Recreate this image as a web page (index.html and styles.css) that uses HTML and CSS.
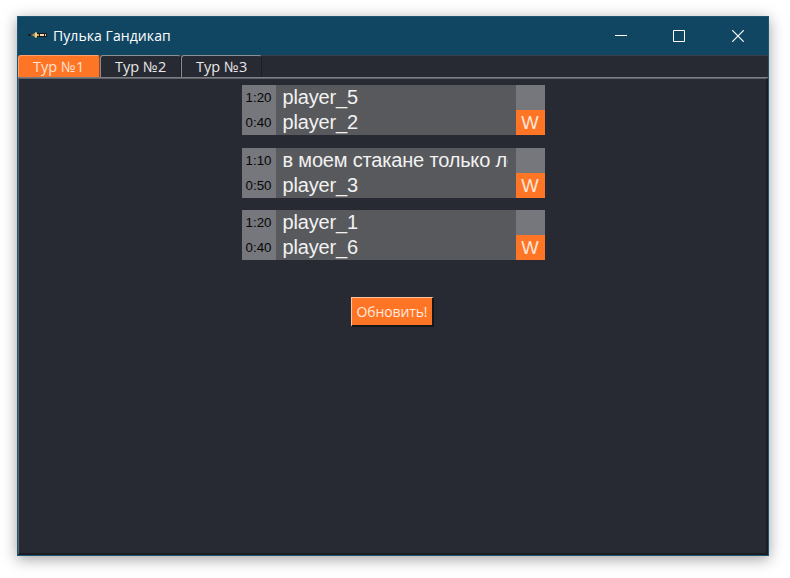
FILE: index.html
```html
<!DOCTYPE html>
<html lang="ru">
<head>
<meta charset="utf-8">
<title>Пулька Гандикап</title>
<link rel="stylesheet" href="styles.css">
</head>
<body>
<main class="window">
  <header class="titlebar">
    <svg class="app-icon" width="20" height="8" viewBox="0 0 20 8">
      <path d="M0 4h7" stroke="#17232b" stroke-width="2"/>
      <path d="M3 4h5" stroke="#8b7a49"/>
      <path d="M4 4l4-3v6z" fill="#b39a50"/>
      <path d="M7 1.500h2v5H7z" fill="#f1d38b"/>
      <path d="M9 2h10v4H9z" fill="#16191d"/>
      <path d="M9 3h2v2H9z" fill="#c9a657"/>
      <path d="M12 3h4v2h-4zM17 3h1v2h-1z" fill="#f2d7a8"/>
    </svg>
    <h1 class="title">Пулька Гандикап</h1>
    <div class="controls">
      <svg width="12" height="12" viewBox="0 0 12 12"><path d="M0 5.5h12" stroke="#fff"/></svg>
      <svg width="12" height="12" viewBox="0 0 12 12"><path d="M.5.5h11v11H.5z" fill="none" stroke="#fff"/></svg>
      <svg width="12" height="12" viewBox="0 0 12 12"><path d="M.3.3l11.4 11.4M11.7.3L.3 11.7" stroke="#fff" stroke-width="1.2"/></svg>
    </div>
  </header>
  <nav class="tabs">
    <span class="tab active">Тур №1</span>
    <span class="tab">Тур №2</span>
    <span class="tab">Тур №3</span>
  </nav>
  <section class="pane">
    <div class="matches">
      <div class="match">
        <span class="time">1:20</span><span class="name"><span class="clip">player_5</span></span><span class="result"></span>
        <span class="time">0:40</span><span class="name"><span class="clip">player_2</span></span><span class="result win">W</span>
      </div>
      <div class="match">
        <span class="time">1:10</span><span class="name"><span class="clip long">в моем стакане только ле</span></span><span class="result"></span>
        <span class="time">0:50</span><span class="name"><span class="clip">player_3</span></span><span class="result win">W</span>
      </div>
      <div class="match">
        <span class="time">1:20</span><span class="name"><span class="clip">player_1</span></span><span class="result"></span>
        <span class="time">0:40</span><span class="name"><span class="clip">player_6</span></span><span class="result win">W</span>
      </div>
    </div>
    <button class="refresh">Обновить!</button>
  </section>
</main>
</body>
</html>
```
FILE: styles.css
```css
* { box-sizing: border-box; }
body {
  margin: 0;
  padding: 16px 21px 22px 17px;
  height: 578px;
  overflow: hidden;
  background: #fff;
  font-family: "Open Sans", "Noto Sans", sans-serif;
}
.window {
  width: 752px;
  height: 540px;
  display: flex;
  flex-direction: column;
  background: #282a33;
  border: 1px solid #1c5672;
  box-shadow: 0 3px 14px rgba(0, 0, 0, .38);
}
.titlebar {
  height: 38px;
  flex: none;
  display: flex;
  align-items: center;
  padding: 0 24px 0 10px;
  background: #114663;
  color: #fff;
}
.app-icon { margin: -2px 5px 0 0; }
.title {
  margin: 0;
  font-size: 14px;
  font-weight: 400;
  line-height: 20px;
  letter-spacing: .07px;
  white-space: nowrap;
}
.controls {
  margin-left: auto;
  display: flex;
  gap: 47px;
}
.controls svg { display: block; }
.controls svg:first-child { margin-right: -1px; }
.tabs {
  height: 23px;
  flex: none;
  display: flex;
  border-top: 1px solid #3b3e47;
  border-bottom: 1px solid #7b7d82;
}
.tab {
  width: 81px;
  margin-top: -1px;
  padding-left: 14px;
  border: 1px solid #8c8e92;
  border-right-color: #1c1e24;
  border-bottom: 0;
  border-radius: 3px 3px 0 0;
  color: #e8e8e9;
  font-size: 14.5px;
  line-height: 22px;
  letter-spacing: .05px;
  white-space: nowrap;
}
.tab.active {
  width: 82px;
  background: #ff7526;
  border-color: #ffa16b;
  border-right-color: #8a4a2a;
  color: #ffe3d3;
}
.pane {
  flex: 1;
  display: flex;
  flex-direction: column;
  align-items: center;
  padding: 6px 0 0 1px;
  border: solid #606269;
  border-width: 1px 2px 2px 1px;
  border-right-color: #1a1c21;
  border-bottom-color: #1a1c21;
}
.matches {
  display: grid;
  gap: 12.5px;
}
.match {
  display: grid;
  grid-template-columns: 34px 240px 29px;
  grid-auto-rows: 25px;
  font-family: "Liberation Sans", Arial, sans-serif;
  line-height: 25px;
}
.time {
  background: #76777c;
  color: #060607;
  font-size: 13.33px;
  text-align: center;
}
.name {
  padding: 0 8px 0 7px;
  background: #58595d;
  color: #f2f2f2;
  font-size: 20px;
  letter-spacing: -.15px;
}
.clip {
  display: block;
  height: 25px;
  overflow: hidden;
  white-space: nowrap;
}
.long { letter-spacing: -.18px; }
.result {
  background: #76777c;
  color: #ffe6d8;
  font-size: 18.5px;
  text-align: center;
}
.win { background: #ff7526; }
.refresh {
  width: 83px;
  height: 30px;
  margin: 37px 1px 0 0;
  padding: 0;
  border: 1px solid #ffc3a0;
  border-right: 2px solid #15161a;
  border-bottom: 2px solid #15161a;
  background: #ff7526;
  color: #ffe9dd;
  font: 14px/26px "Open Sans", sans-serif;
  letter-spacing: -.12px;
}
```
